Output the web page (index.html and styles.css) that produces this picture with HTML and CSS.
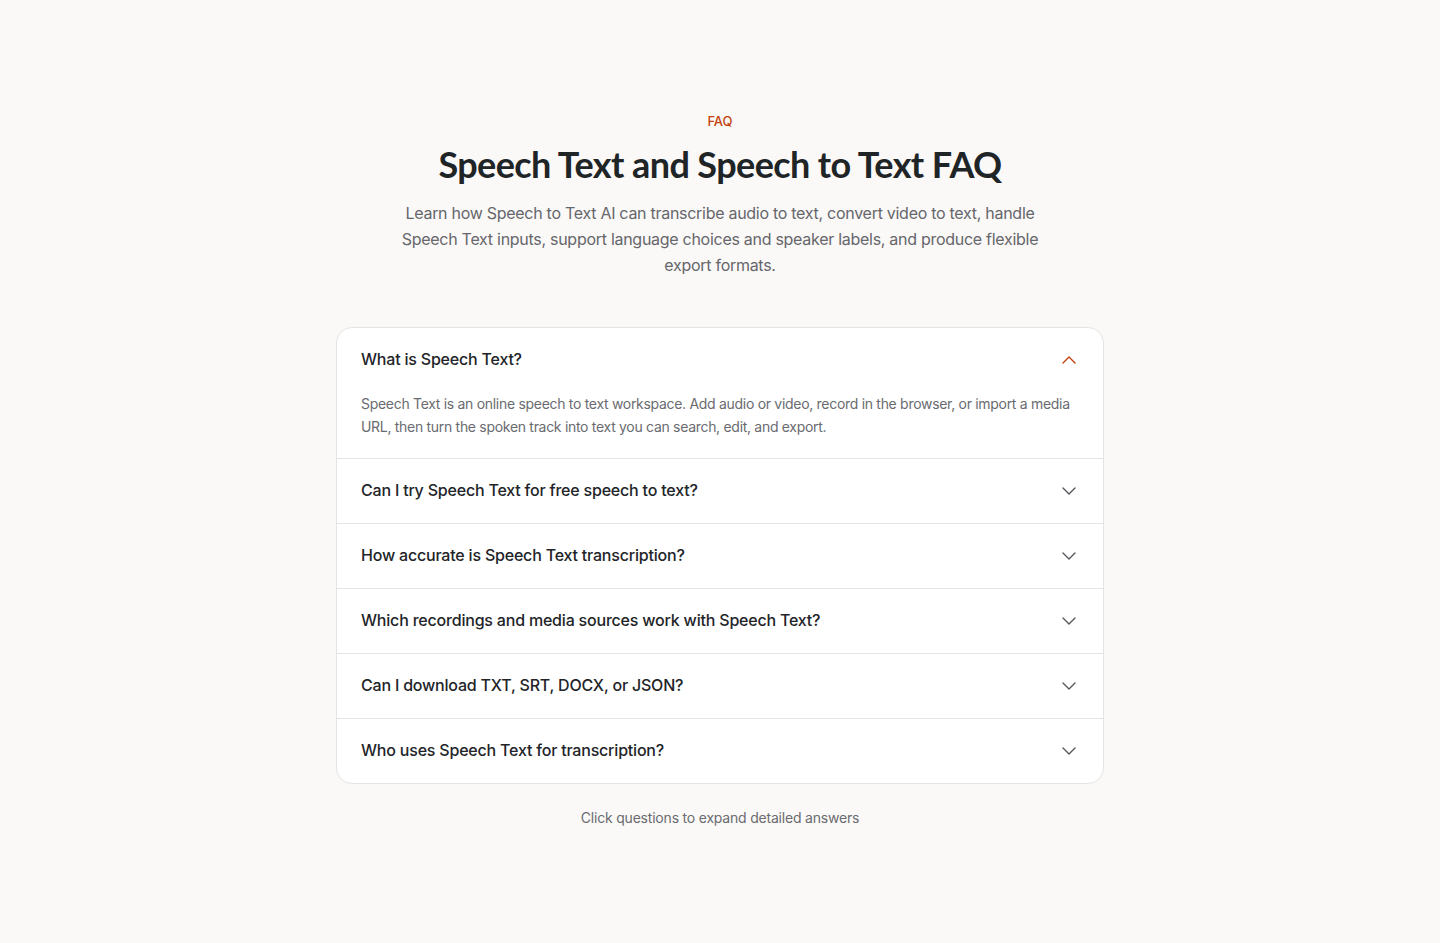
FILE: index.html
```html
<!DOCTYPE html>
<html lang="en">
<head>
<meta charset="utf-8">
<title>FAQ</title>
<link rel="stylesheet" href="styles.css">
</head>
<body>
<section class="faq">
  <div class="intro">
    <p class="eyebrow">FAQ</p>
    <h2 class="title">Speech Text and Speech to Text FAQ</h2>
    <p class="lead">Learn how Speech to Text AI can transcribe audio to text, convert video to text, handle Speech Text inputs, support language choices and speaker labels, and produce flexible export formats.</p>
  </div>
  <div class="card">
    <div class="item open">
      <div class="q"><span>What is Speech Text?</span>
        <svg class="chev" viewBox="0 0 16 16"><polyline points="2,11 8,5 14,11"/></svg>
      </div>
      <p class="a">Speech Text is an online speech to text workspace. Add audio or video, record in the browser, or import a media URL, then turn the spoken track into text you can search, edit, and export.</p>
    </div>
    <div class="item">
      <div class="q"><span>Can I try Speech Text for free speech to text?</span>
        <svg class="chev" viewBox="0 0 16 16"><polyline points="2,5 8,11 14,5"/></svg>
      </div>
    </div>
    <div class="item">
      <div class="q"><span>How accurate is Speech Text transcription?</span>
        <svg class="chev" viewBox="0 0 16 16"><polyline points="2,5 8,11 14,5"/></svg>
      </div>
    </div>
    <div class="item">
      <div class="q"><span>Which recordings and media sources work with Speech Text?</span>
        <svg class="chev" viewBox="0 0 16 16"><polyline points="2,5 8,11 14,5"/></svg>
      </div>
    </div>
    <div class="item">
      <div class="q"><span>Can I download TXT, SRT, DOCX, or JSON?</span>
        <svg class="chev" viewBox="0 0 16 16"><polyline points="2,5 8,11 14,5"/></svg>
      </div>
    </div>
    <div class="item">
      <div class="q"><span>Who uses Speech Text for transcription?</span>
        <svg class="chev" viewBox="0 0 16 16"><polyline points="2,5 8,11 14,5"/></svg>
      </div>
    </div>
  </div>
  <p class="hint">Click questions to expand detailed answers</p>
</section>
</body>
</html>
```

FILE: styles.css
```css
html, body {
  margin: 0;
  padding: 0;
  background: #faf9f7;
  font-family: Inter, "Liberation Sans", sans-serif;
  color: #1f2328;
}
.faq {
  width: 768px;
  margin: 0 auto;
  padding-top: 111px;
  padding-bottom: 100px;
}
.intro {
  text-align: center;
}
.eyebrow {
  margin: 0;
  font-size: 13px;
  line-height: 20px;
  font-weight: 500;
  color: #c2410c;
}
.title {
  margin: 11px 0 0;
  font-family: "Lato", "Noto Sans", sans-serif;
  font-size: 36px;
  line-height: 44px;
  font-weight: 700;
  letter-spacing: -0.6px;
  color: #1f2427;
}
.lead {
  margin: 14px auto 0;
  max-width: 640px;
  font-size: 16px;
  line-height: 26px;
  letter-spacing: -0.28px;
  color: #66666b;
}
.card {
  margin-top: 49px;
  background: #fff;
  border: 1px solid #e6e4e1;
  border-radius: 16px;
  overflow: hidden;
}
.item + .item {
  border-top: 1px solid #e6e4e1;
}
.q {
  height: 64px;
  display: flex;
  align-items: center;
  justify-content: space-between;
  padding: 0 26px 0 24px;
  font-size: 16px;
  font-weight: 500;
  letter-spacing: -0.2px;
  color: #222428;
}
.q span {
  position: relative;
  top: -1px;
}
.chev {
  width: 16px;
  height: 16px;
  fill: none;
  stroke: #55565a;
  stroke-width: 1.4;
  stroke-linecap: round;
  stroke-linejoin: round;
}
.open .chev {
  stroke: #c2410c;
}
.a {
  margin: 0;
  padding: 0 24px 20px;
  font-size: 14px;
  line-height: 23px;
  letter-spacing: -0.3px;
  color: #6a6b70;
}
.hint {
  margin: 24px 0 0;
  text-align: center;
  font-size: 14px;
  line-height: 20px;
  letter-spacing: -0.2px;
  color: #6a6b70;
}
```
